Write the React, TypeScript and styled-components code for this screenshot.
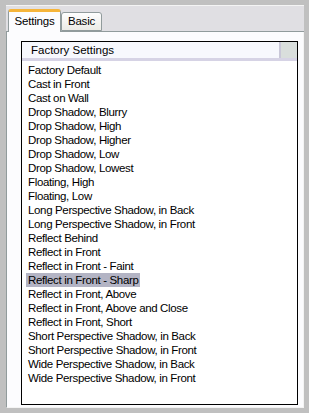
import React from "react"
import styled, { createGlobalStyle } from "styled-components"

const GlobalStyle = createGlobalStyle`
    html, body {
        margin: 0;
        padding: 0;
        background: #c0c0c0;
        font-family: "Liberation Sans", Arial, sans-serif;
        font-size: 11px;
    }
`

const presets = [
    "Factory Default",
    "Cast in Front",
    "Cast on Wall",
    "Drop Shadow, Blurry",
    "Drop Shadow, High",
    "Drop Shadow, Higher",
    "Drop Shadow, Low",
    "Drop Shadow, Lowest",
    "Floating, High",
    "Floating, Low",
    "Long Perspective Shadow, in Back",
    "Long Perspective Shadow, in Front",
    "Reflect Behind",
    "Reflect in Front",
    "Reflect in Front - Faint",
    "Reflect in Front - Sharp",
    "Reflect in Front, Above",
    "Reflect in Front, Above and Close",
    "Reflect in Front, Short",
    "Short Perspective Shadow, in Back",
    "Short Perspective Shadow, in Front",
    "Wide Perspective Shadow, in Back",
    "Wide Perspective Shadow, in Front",
]

const selectedPreset = "Reflect in Front - Sharp"

const Frame = styled.div`
    width: 309px;
    height: 413px;
    box-sizing: border-box;
    padding: 5px 5px 5px 6px;
    display: flex;
    flex-direction: column;
`

const TabStrip = styled.div`
    height: 27px;
    box-sizing: border-box;
    background: #e0dfe3;
    border-top: 1px solid #f4f4f4;
    border-bottom: 1px solid #919b9c;
    display: flex;
    align-items: flex-end;
    padding-left: 2px;
`

const Tab = styled.div<{ $active?: boolean }>`
    box-sizing: border-box;
    width: ${(p) => (p.$active ? "53px" : "41px")};
    height: ${(p) => (p.$active ? "23px" : "19px")};
    margin-bottom: ${(p) => (p.$active ? "-1px" : "0")};
    padding-top: ${(p) => (p.$active ? "3px" : "2px")};
    text-align: center;
    border: 1px solid #919b9c;
    border-bottom: ${(p) => (p.$active ? "none" : "1px solid #919b9c")};
    border-top: ${(p) => (p.$active ? "3px solid #f6b53a" : "1px solid #919b9c")};
    border-radius: 3px 3px 0 0;
    background: ${(p) => (p.$active ? "#fcfcfe" : "linear-gradient(#fefefe, #ecebe6)")};
    color: #000;
    font-size: 11.5px;
    letter-spacing: -0.2px;
    position: relative;
    z-index: ${(p) => (p.$active ? 1 : 0)};
`

const Panel = styled.div`
    flex: 1;
    background: #fcfcfe;
    border-left: 1px solid #919b9c;
    border-right: 1px solid #f4f4f4;
    border-bottom: 1px solid #f4f4f4;
    padding: 9px 5px 2px 14px;
    display: flex;
`

const ListBox = styled.div`
    flex: 1;
    border: 1px solid #000;
    background: #fff;
    display: flex;
    flex-direction: column;
`

const HeaderRow = styled.div`
    height: 19px;
    box-sizing: border-box;
    display: flex;
    border-bottom: 3px solid #d6d3e5;
`

const HeaderCell = styled.div`
    width: 259px;
    box-sizing: border-box;
    background: #f7f8fd;
    padding: 2px 0 0 9px;
    font-size: 11.5px;
    border-right: 2px solid #c9c7d8;
`

const HeaderFill = styled.div`
    flex: 1;
    background: #d9dedc;
`

const Items = styled.div`
    padding: 2px 0 0 4px;
    display: flex;
    flex-direction: column;
`

const Item = styled.div<{ $selected?: boolean }>`
    align-self: flex-start;
    height: 14px;
    line-height: 14px;
    padding: 0 2px;
    font-size: 11.5px;
    letter-spacing: -0.35px;
    color: #000;
    background: ${(p) => (p.$selected ? "#b3b4c4" : "transparent")};
`

export default function App() {
    return (
        <>
            <GlobalStyle />
            <Frame>
                <TabStrip>
                    <Tab $active>Settings</Tab>
                    <Tab>Basic</Tab>
                </TabStrip>
                <Panel>
                    <ListBox>
                        <HeaderRow>
                            <HeaderCell>Factory Settings</HeaderCell>
                            <HeaderFill />
                        </HeaderRow>
                        <Items>
                            {presets.map((name) => (
                                <Item key={name} $selected={name === selectedPreset}>
                                    {name}
                                </Item>
                            ))}
                        </Items>
                    </ListBox>
                </Panel>
            </Frame>
        </>
    )
}
